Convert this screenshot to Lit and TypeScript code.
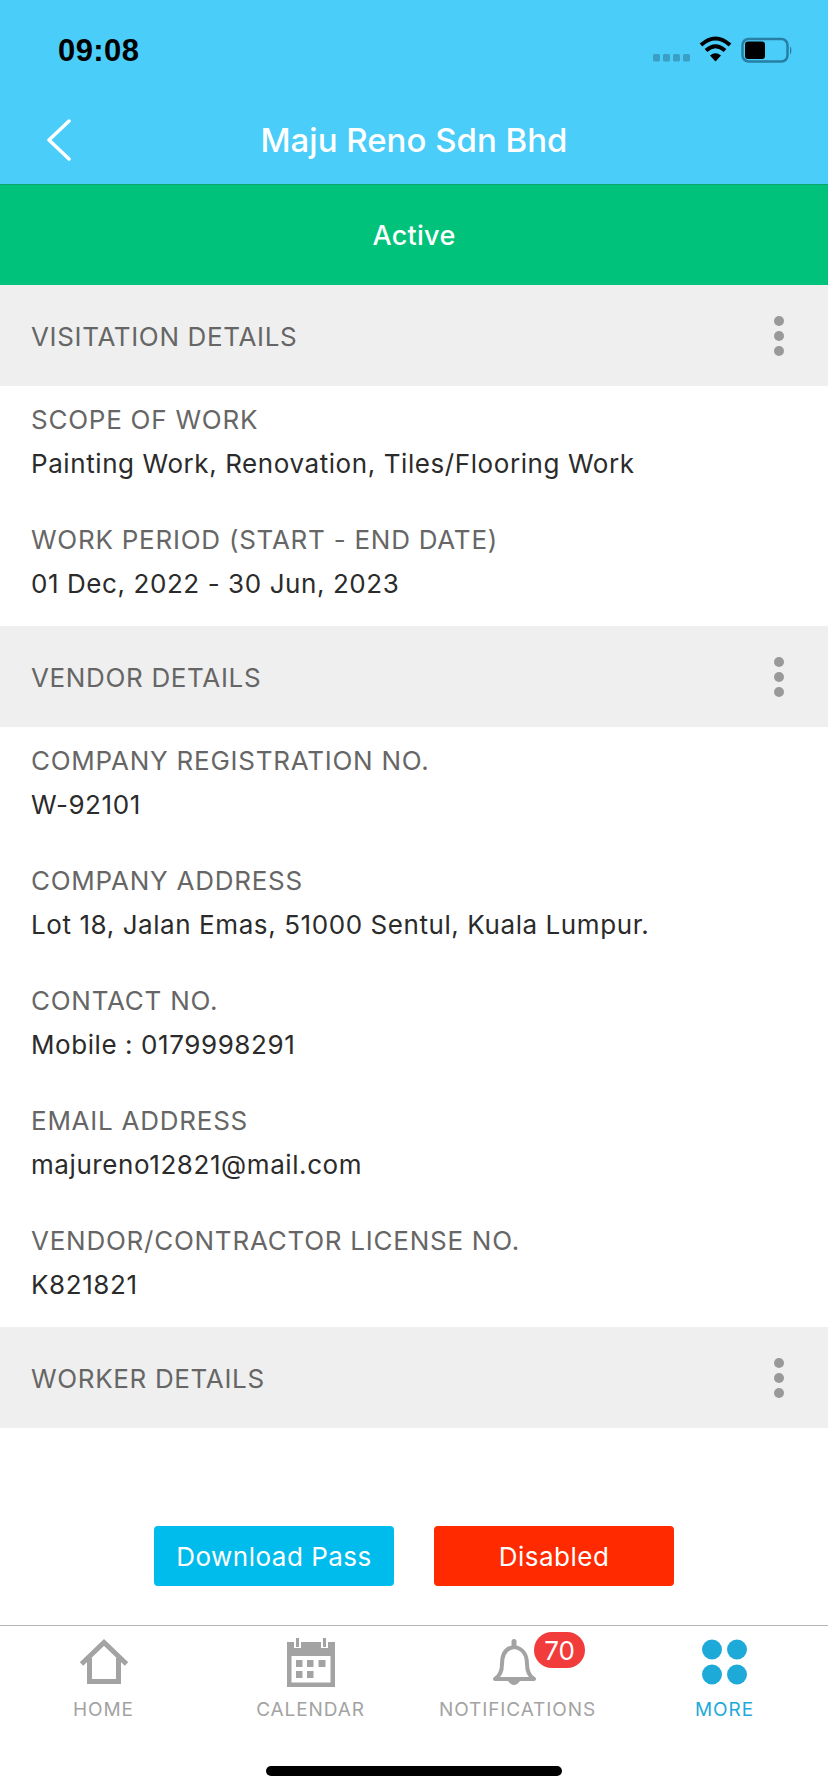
import { LitElement, html, css } from "lit";
import { customElement } from "lit/decorators.js";

interface Item { label: string; value: string }
const visitation: Item[] = [
  { label: "SCOPE OF WORK", value: "Painting Work, Renovation, Tiles/Flooring Work" },
  { label: "WORK PERIOD (START - END DATE)", value: "01 Dec, 2022 - 30 Jun, 2023" },
];
const vendor: Item[] = [
  { label: "COMPANY REGISTRATION NO.", value: "W-92101" },
  { label: "COMPANY ADDRESS", value: "Lot 18, Jalan Emas, 51000 Sentul, Kuala Lumpur." },
  { label: "CONTACT NO.", value: "Mobile : 0179998291" },
  { label: "EMAIL ADDRESS", value: "majureno12821@mail.com" },
  { label: "VENDOR/CONTRACTOR LICENSE NO.", value: "K821821" },
];

@customElement("app-root")
export class AppRoot extends LitElement {
  static styles = css`
    :host { display: block; width: 828px; height: 1792px; background: #fff; overflow: hidden; font-family: Inter, "Liberation Sans", sans-serif; }
    .page { display: flex; flex-direction: column; height: 1792px; }
    .top { height: 185px; background: #4bcdf9; display: flex; flex-direction: column; flex: none; border-bottom: 1px solid #0ea36d; box-sizing: border-box; }
    .status { height: 92px; display: flex; align-items: center; justify-content: space-between; padding: 9px 34px 0 58px; box-sizing: border-box; }
    .time { font-size: 31px; font-weight: 600; color: #000; font-family: "Liberation Sans", sans-serif; letter-spacing: 0.4px; }
    .status-icons { display: flex; align-items: center; gap: 0; }
    .nav { flex: 1; display: grid; grid-template-columns: 92px 1fr 92px; align-items: center; padding-top: 4px; }
    .back { display: flex; padding-left: 47px; }
    .title { text-align: center; color: #fff; font-size: 33px; font-weight: 500; letter-spacing: 0; }
    .state { height: 100px; flex: none; background: #00c27a; color: #fff; font-size: 27px; font-weight: 500; letter-spacing: 0.3px; display: flex; align-items: center; justify-content: center; }
    .sec { height: 101px; flex: none; background: #efefef; display: flex; align-items: center; justify-content: space-between; padding: 1px 44px 0 31px; color: #666; font-size: 26px; letter-spacing: 0.65px; box-sizing: border-box; }
    .dots { display: flex; flex-direction: column; gap: 5px; margin-top: -1px; }
    .dots i { width: 10px; height: 10px; border-radius: 50%; background: #999; display: block; }
    .item { height: 120px; padding: 14px 31px 0; box-sizing: border-box; flex: none; }
    .label { font-size: 26px; line-height: 40px; color: #666; letter-spacing: 0.75px; }
    .value { font-size: 26px; line-height: 47px; color: #2b2b2b; letter-spacing: 0.58px; }
    .actions { flex: 1; display: flex; justify-content: center; align-items: flex-start; gap: 40px; padding-top: 98px; }
    .btn { width: 240px; height: 60px; border-radius: 4px; color: #fff; font-size: 26px; letter-spacing: 0.5px; display: flex; align-items: center; justify-content: center; }
    .blue { background: #00bcec; }
    .red { background: #ff2a00; }
    .tabs { height: 167px; flex: none; border-top: 1px solid #b5b5b5; box-sizing: border-box; display: flex; flex-direction: column; background: #fff; }
    .tab-row { display: grid; grid-template-columns: repeat(4, 207px); }
    .tab { display: flex; flex-direction: column; align-items: center; color: #a3a3a3; font-size: 19px; letter-spacing: 0.9px; padding-top: 13px; position: relative; }
    .tab svg { display: block; }
    .tab span.t { line-height: 26px; margin-top: 10px; }
    .more { color: #1eaad9; }
    .badge { position: absolute; left: 120px; top: 6px; width: 51px; height: 36px; border-radius: 18px; background: #f23b3b; color: #fff; font-size: 26px; letter-spacing: 0; display: flex; align-items: center; justify-content: center; }
    .indicator { width: 296px; height: 10px; border-radius: 5px; background: #000; margin: 43px auto 0; }
    .bell { margin-left: -4px; }
    .cal { margin: -1px 0 -1px; }
  `;

  private items(list: Item[]) {
    return list.map((i) => html`<div class="item"><div class="label">${i.label}</div><div class="value">${i.value}</div></div>`);
  }
  private sec(t: string) {
    return html`<div class="sec"><span>${t}</span><span class="dots"><i></i><i></i><i></i></span></div>`;
  }

  render() {
    return html`<div class="page">
      <div class="top">
        <div class="status">
          <span class="time">09:08</span>
          <span class="status-icons">
            <svg width="142" height="40" viewBox="0 0 142 40">
              <g fill="#3a9fc4"><rect x="1" y="23" width="7" height="7.500" rx="1.500"/><rect x="11" y="23" width="7" height="7.500" rx="1.500"/><rect x="21" y="23" width="7" height="7.500" rx="1.500"/><rect x="31" y="23" width="7" height="7.500" rx="1.500"/></g>
              <g fill="none" stroke="#000" stroke-width="4"><path d="M49 14 Q63.500 1 78 14"/><path d="M54 19.500 Q63.500 11 73 19.500"/></g>
              <path d="M58 24.500 Q63.500 20 69 24.500 L63.500 30.500 Z" fill="#000" />
              <rect x="90.500" y="8" width="45" height="22.500" rx="6" fill="none" stroke="#277fa3" stroke-width="2.500"/>
              <rect x="93" y="10.500" width="20" height="17.500" rx="3" fill="#000"/>
              <path d="M138 15 Q141 19 138 24 Z" fill="#277fa3"/>
            </svg>
          </span>
        </div>
        <div class="nav">
          <span class="back"><svg width="24" height="42" viewBox="0 0 24 42"><path d="M22 2 L2 21 L22 40" fill="none" stroke="#fff" stroke-width="3.500" stroke-linecap="round" stroke-linejoin="round"/></svg></span>
          <span class="title">Maju Reno Sdn Bhd</span>
          <span></span>
        </div>
      </div>
      <div class="state">Active</div>
      ${this.sec("VISITATION DETAILS")}
      ${this.items(visitation)}
      ${this.sec("VENDOR DETAILS")}
      ${this.items(vendor)}
      ${this.sec("WORKER DETAILS")}
      <div class="actions"><div class="btn blue">Download Pass</div><div class="btn red">Disabled</div></div>
      <div class="tabs">
        <div class="tab-row">
          <div class="tab">
            <svg width="48" height="48" viewBox="0 0 48 48"><path d="M1.500 25 L24 3.500 L46.500 25" fill="none" stroke="#a3a3a3" stroke-width="5"/><path d="M9.500 19 V42.500 H38.500 V19" fill="none" stroke="#a3a3a3" stroke-width="5"/></svg>
            <span class="t">HOME</span>
          </div>
          <div class="tab">
            <svg class="cal" width="50" height="50" viewBox="0 0 50 50"><path fill-rule="evenodd" fill="#a3a3a3" d="M1 4 H8 V10 H15 V4 H35 V10 H42 V4 H49 V49 H1 Z M5.500 18 V44.500 H44.500 V18 Z"/><path fill="none" stroke="#a3a3a3" stroke-width="3" d="M11.500 0 V9 M38.500 0 V9"/><g fill="#a3a3a3"><rect x="10" y="22" width="6.500" height="7"/><rect x="21" y="22" width="6.500" height="7"/><rect x="32.500" y="22" width="7" height="7"/><rect x="10" y="33" width="6.500" height="7"/><rect x="21" y="33" width="6.500" height="7"/></g></svg>
            <span class="t">CALENDAR</span>
          </div>
          <div class="tab">
            <svg class="bell" width="48" height="48" viewBox="0 0 48 48"><path d="M3 40 C8 37 10 33 10 25 C10 15 14 9 22 8 C30 9 35 15 35 25 C35 33 37 37 42 40 Z" fill="none" stroke="#a3a3a3" stroke-width="4" stroke-linejoin="round"/><rect x="19.500" y="0" width="5" height="8" rx="2.500" fill="#a3a3a3"/><path d="M16 42 Q22 50 28 42 Z" fill="#a3a3a3"/></svg>
            <span class="t">NOTIFICATIONS</span>
            <span class="badge">70</span>
          </div>
          <div class="tab more">
            <svg width="46" height="48" viewBox="0 0 46 48"><g fill="#1eaad9"><circle cx="10" cy="10.500" r="10"/><circle cx="35" cy="10.500" r="10"/><circle cx="10" cy="35.500" r="10"/><circle cx="35" cy="35.500" r="10"/></g></svg>
            <span class="t">MORE</span>
          </div>
        </div>
        <div class="indicator"></div>
      </div>
    </div>`;
  }
}
